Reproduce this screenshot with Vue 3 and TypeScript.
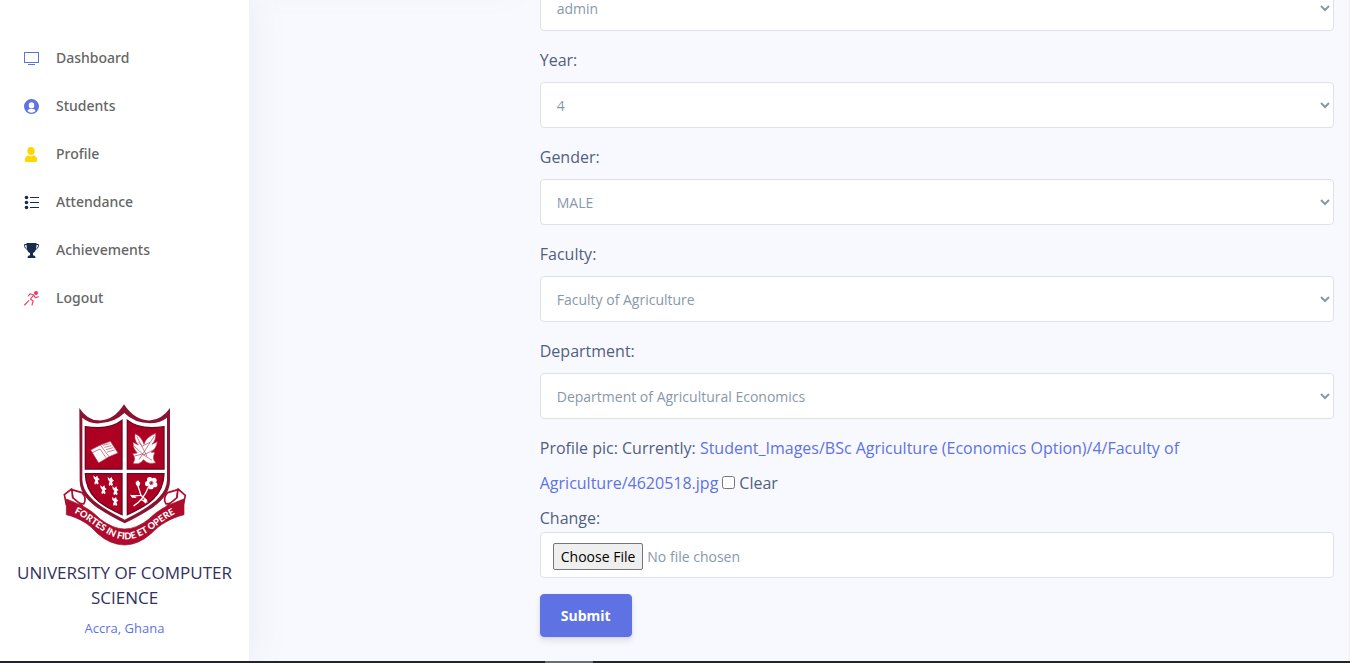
<script setup lang="ts">
import { ref } from 'vue'

interface Field {
  id: string
  label?: string
  value: string
}

const links = [
  { label: 'Dashboard', icon: 'screen', tone: 'primary' },
  { label: 'Students', icon: 'circle', tone: 'primary' },
  { label: 'Profile', icon: 'person', tone: 'yellow' },
  { label: 'Attendance', icon: 'list', tone: 'dark' },
  { label: 'Achievements', icon: 'trophy', tone: 'dark' },
  { label: 'Logout', icon: 'run', tone: 'pink' },
]

const fields = ref<Field[]>([
  { id: 'user', value: 'admin' },
  { id: 'year', label: 'Year:', value: '4' },
  { id: 'gender', label: 'Gender:', value: 'MALE' },
  { id: 'faculty', label: 'Faculty:', value: 'Faculty of Agriculture' },
  { id: 'department', label: 'Department:', value: 'Department of Agricultural Economics' },
])

const clearPicture = ref(false)
</script>

<template>
  <div class="page">
    <div class="layout">
      <aside class="sidebar">
        <nav>
          <ul class="nav">
            <li v-for="link in links" :key="link.label">
              <a href="#" class="nav-link">
                <svg class="icon" :class="link.tone" viewBox="0 0 15 15" aria-hidden="true">
                  <g v-if="link.icon === 'screen'" fill="currentColor">
                    <path fill-rule="evenodd" d="M0 1h15v11H0zM1 2v9h13V2z" />
                    <path d="M4 13h7v1H4z" />
                  </g>
                  <path
                    v-else-if="link.icon === 'circle'"
                    fill="currentColor"
                    fill-rule="evenodd"
                    d="M7.500 0a7.500 7.500 0 1 0 0 15a7.500 7.500 0 0 0 0-15zM7.500 3.200a2.700 2.700 0 0 1 2.700 2.700v.8a2.700 2.700 0 0 1-5.400 0v-.8A2.700 2.700 0 0 1 7.500 3.200zM3.600 12c.3-1.600 1.500-1.900 3.900-1.900s3.600.3 3.900 1.900c-1.100 1.100-2.300 1.700-3.900 1.700s-2.800-.6-3.900-1.700z"
                  />
                  <g v-else-if="link.icon === 'person'" fill="currentColor">
                    <ellipse cx="7" cy="4" rx="3.700" ry="4" />
                    <path d="M.8 13.200c0-3.200 2-4.700 3.700-4.700c1.600.9 3.400.9 5 0c1.700 0 3.700 1.500 3.700 4.700c0 1.200-.5 1.800-1.500 1.800H2.300C1.300 15 .8 14.400.8 13.200z" />
                  </g>
                  <g v-else-if="link.icon === 'list'" fill="currentColor">
                    <circle cx="2.500" cy="2.500" r="1.800" />
                    <circle cx="2.500" cy="7.500" r="1.800" />
                    <circle cx="2.500" cy="12.500" r="1.800" />
                    <path d="M6 2h9v1H6zM6 7h9v1H6zM6 12h9v1H6z" />
                  </g>
                  <g v-else-if="link.icon === 'trophy'">
                    <path
                      fill="currentColor"
                      d="M2.500 0h10c0 5-.5 9-3.500 10v2.200c1.700.2 2.500 1 2.500 2.800h-8c0-1.800.8-2.600 2.500-2.800V10c-3-1-3.500-5-3.500-10z"
                    />
                    <path fill="none" stroke="currentColor" d="M3 1.500H.5C.5 4.500 1.500 6 4 6.500M12 1.500h2.500c0 3-1 4.500-3.500 5" />
                  </g>
                  <g v-else fill="none" stroke="currentColor" stroke-width="1.100" stroke-linecap="round" stroke-linejoin="round">
                    <circle cx="12" cy="2" r="1.400" fill="currentColor" />
                    <path d="M4.300 5L6 2.800l3.700 1.300L6.500 8l2.700 2L8 14M9.700 4.100l1.600 2.600l3.200-1M4.800 9.500l-1.500 1.700L.6 14" />
                  </g>
                </svg>
                <span>{{ link.label }}</span>
              </a>
            </li>
          </ul>
        </nav>

        <section class="school">
          <svg class="crest" viewBox="30 24 390 432" role="img" aria-label="University crest">
            <defs>
              <path id="motto" d="M56 344C122 366 166 430 228 430S330 370 392 346" />
            </defs>
            <g fill="#fff" stroke="#b00b2c" stroke-width="5" stroke-linejoin="round">
              <path d="M65 281L96 290Q112 307 101 324L70 318Z" />
              <path d="M384 281L353 290Q337 307 348 324L379 318Z" />
              <path d="M43 296L65 279L68 305L97 329L78 338L49 326Z" />
              <path d="M406 298L384 279L381 305L352 329L371 338L400 326Z" />
            </g>
            <path
              fill="#8a1430"
              d="M88 36Q112 73 145 73Q190 76 222 25Q256 76 302 73Q336 70 360 36L360 254C360 316 280 354 224 382C170 354 89 316 89 254Z"
            />
            <path
              fill="#fff"
              d="M97 65Q118 84 148 82Q194 80 223 51Q253 81 300 82Q330 82 351 65L351 252C350 307 278 343 224 371C172 343 98 307 97 252Z"
            />
            <g fill="#ad0022" stroke="#6b0822" stroke-width="4">
              <path d="M106 92Q178 104 216 73V219H106Z" />
              <path d="M232 73Q270 104 342 92V219H232Z" />
              <path d="M106 233H216V356C150 326 108 297 106 233Z" />
              <path d="M232 233H342C340 297 298 326 232 356Z" />
            </g>
            <g fill="#fff" stroke="#b83c51" stroke-width="2">
              <path d="M122 162L151 147L181 136L204 171L177 182L146 201Z" />
              <path fill="none" d="M151 147L177 182M125 171L150 159L168 185M159 148L179 143M163 154L184 149M168 161L189 155M172 168L194 162" />
              <path
                d="M256 113Q276 124 282 145Q287 124 317 112Q319 132 306 145L322 137Q319 158 303 169L315 169Q304 189 318 200Q294 207 281 191Q267 208 249 202Q259 187 248 173L262 171Q248 157 249 139L265 147Q250 129 256 113Z"
              />
              <path fill="none" d="M260 121L291 181M313 120L267 191M253 151L281 177L312 161M254 180L277 174L306 193M265 139L277 150L300 139" />
            </g>
            <g fill="#fff">
              <g v-for="(spot, i) in [[139, 251], [182, 255], [160, 280], [196, 283], [195, 315]]" :key="i" :transform="`translate(${spot[0]} ${spot[1]})`">
                <path d="M-9-13L-3-7L3-12L5-5L10-1L4 3L7 11L3 15L0 11L-4 15L-6 9L-3 2L-8-4Z" />
              </g>
            </g>
            <path
              fill="none"
              stroke="#fff"
              stroke-width="4"
              stroke-linecap="round"
              d="M252 329Q280 312 295 274M263 267L273 298L282 306M271 298L247 300M273 311L291 318"
            />
            <g fill="#fff">
              <path d="M257 259L264 253L271 261L268 270L258 268ZM240 296L253 298L260 306L246 305ZM284 305L292 312L287 323L279 315Z" />
              <circle cx="299" cy="251" r="8" />
              <circle cx="312" cy="253" r="8" />
              <circle cx="314" cy="266" r="8" />
              <circle cx="303" cy="272" r="8" />
              <circle cx="293" cy="263" r="8" />
            </g>
            <circle cx="304" cy="261" r="5" fill="none" stroke="#ad0022" stroke-width="2" />
            <path
              fill="#b00b2c"
              stroke="#92102c"
              stroke-width="2"
              d="M49 309C92 326 119 337 150 369Q190 399 224 399Q260 399 298 368C329 338 356 326 402 309V356C360 367 330 385 303 413Q264 447 224 447Q182 447 143 413C118 385 92 367 49 356Z"
            />
            <text class="motto" text-anchor="middle">
              <textPath href="#motto" startOffset="50%">FORTES IN FIDE ET OPERE</textPath>
            </text>
          </svg>
          <h1>UNIVERSITY OF COMPUTER SCIENCE</h1>
          <a href="#" class="place">Accra, Ghana</a>
        </section>
      </aside>

      <main class="content">
        <div class="side-column"><div class="card"></div></div>
        <form class="form" @submit.prevent>
          <div v-for="field in fields" :key="field.id" class="field">
            <label v-if="field.label" :for="field.id">{{ field.label }}</label>
            <select :id="field.id" v-model="field.value" class="control" :aria-label="field.label ?? field.id">
              <option>{{ field.value }}</option>
            </select>
          </div>
          <div class="picture">
            Profile pic: Currently:
            <a href="#">Student_Images/BSc Agriculture (Economics Option)/4/Faculty of Agriculture/4620518.jpg</a>
            <input id="clear" v-model="clearPicture" type="checkbox" />
            <label for="clear">Clear</label>
          </div>
          <div class="upload">
            <label for="picture">Change:</label>
            <input id="picture" type="file" class="control" />
          </div>
          <button type="submit" class="submit">Submit</button>
        </form>
      </main>
    </div>
    <div class="bottom-bar"><div class="bottom-thumb"></div></div>
  </div>
</template>

<style>
body {
  margin: 0;
  background: #f8f9fe;
}
</style>

<style scoped>
* {
  box-sizing: border-box;
}
.page {
  display: flex;
  flex-direction: column;
  height: 100vh;
  overflow: hidden;
  background: #f8f9fe;
  color: #525f7f;
  font: 400 16px/27px 'Open Sans', sans-serif;
}
.layout {
  display: flex;
  flex: 1;
  min-height: 0;
  border-right: 1px solid #f0f0f3;
}
a {
  color: #5e72e4;
  text-decoration: none;
}
.sidebar {
  position: relative;
  display: flex;
  flex-direction: column;
  justify-content: space-between;
  flex: 0 0 250px;
  padding: 33px 0 23px;
  background: #fff;
  border-right: 1px solid #f2f2f2;
  box-shadow: 0 0 32px rgba(136, 152, 170, 0.15);
}
.nav {
  margin: 0;
  padding: 0;
  list-style: none;
}
.nav-link {
  display: flex;
  align-items: center;
  gap: 17px;
  height: 48px;
  padding: 0 24px;
  color: #666;
  font-family: 'Noto Sans', 'Open Sans', sans-serif;
  font-size: 14px;
  font-weight: 500;
}
.icon {
  width: 15px;
  height: 15px;
  margin-top: 3px;
}
.primary {
  color: #5e72e4;
}
.yellow {
  color: #ffd600;
}
.dark {
  color: #172b4d;
}
.pink {
  color: #f5365c;
}
.school {
  display: flex;
  flex-direction: column;
  align-items: center;
  text-align: center;
}
.crest {
  width: 130px;
  height: 144px;
}
.motto {
  fill: #fff;
  font: 900 28px 'Lato', sans-serif;
}
h1 {
  margin: 12px 0 8px;
  color: #32325d;
  font-size: 17px;
  font-weight: 500;
  line-height: 25px;
}
.place {
  font-size: 13px;
  line-height: 20px;
}
.content {
  display: grid;
  grid-template-columns: 1fr 3fr;
  grid-template-rows: minmax(0, 1fr);
  flex: 1;
  min-width: 0;
}
.side-column {
  padding: 0 15px;
}
.card {
  height: 60px;
  margin-top: -76px;
  border-radius: 6px;
  background: #fff;
  box-shadow: 0 0 32px rgba(136, 152, 170, 0.15);
}
.form {
  display: flex;
  flex-direction: column;
  justify-content: flex-end;
  min-width: 0;
  padding: 0 15px 24px;
}
.field {
  flex: none;
  margin-bottom: 16px;
}
.field label {
  display: block;
  margin-bottom: 8px;
}
.control {
  display: block;
  width: 100%;
  height: 46px;
  padding: 10px 12px;
  border: 1px solid #dee2e6;
  border-radius: 4px;
  background-color: #fff;
  color: #8898aa;
  font: 400 14px/24px 'Open Sans', sans-serif;
}
.control::file-selector-button {
  height: 27px;
  padding: 1px 7px;
  border: 1px solid #767676;
  border-radius: 2px;
  background: #efefef;
  color: #000;
  font: inherit;
}
.picture {
  margin-top: -4px;
  line-height: 35px;
}
.picture input {
  width: 13px;
  height: 13px;
  margin: 0 4px;
}
.upload {
  margin: 4px 0 16px;
}
.upload label {
  display: block;
}
.submit {
  align-self: flex-start;
  padding: 10px 20px;
  border: 1px solid #5e72e4;
  border-radius: 4px;
  background: #5e72e4;
  box-shadow: 0 4px 6px rgba(50, 50, 93, 0.11), 0 1px 3px rgba(0, 0, 0, 0.08);
  color: #fff;
  font: 700 14px/21px 'Open Sans', sans-serif;
}
.bottom-bar {
  position: relative;
  display: grid;
  grid-template-columns: 545fr 48fr 757fr;
  flex: none;
  height: 2px;
  background: #212529;
}
.bottom-thumb {
  grid-column: 2;
  background: #6b6d70;
}
</style>
